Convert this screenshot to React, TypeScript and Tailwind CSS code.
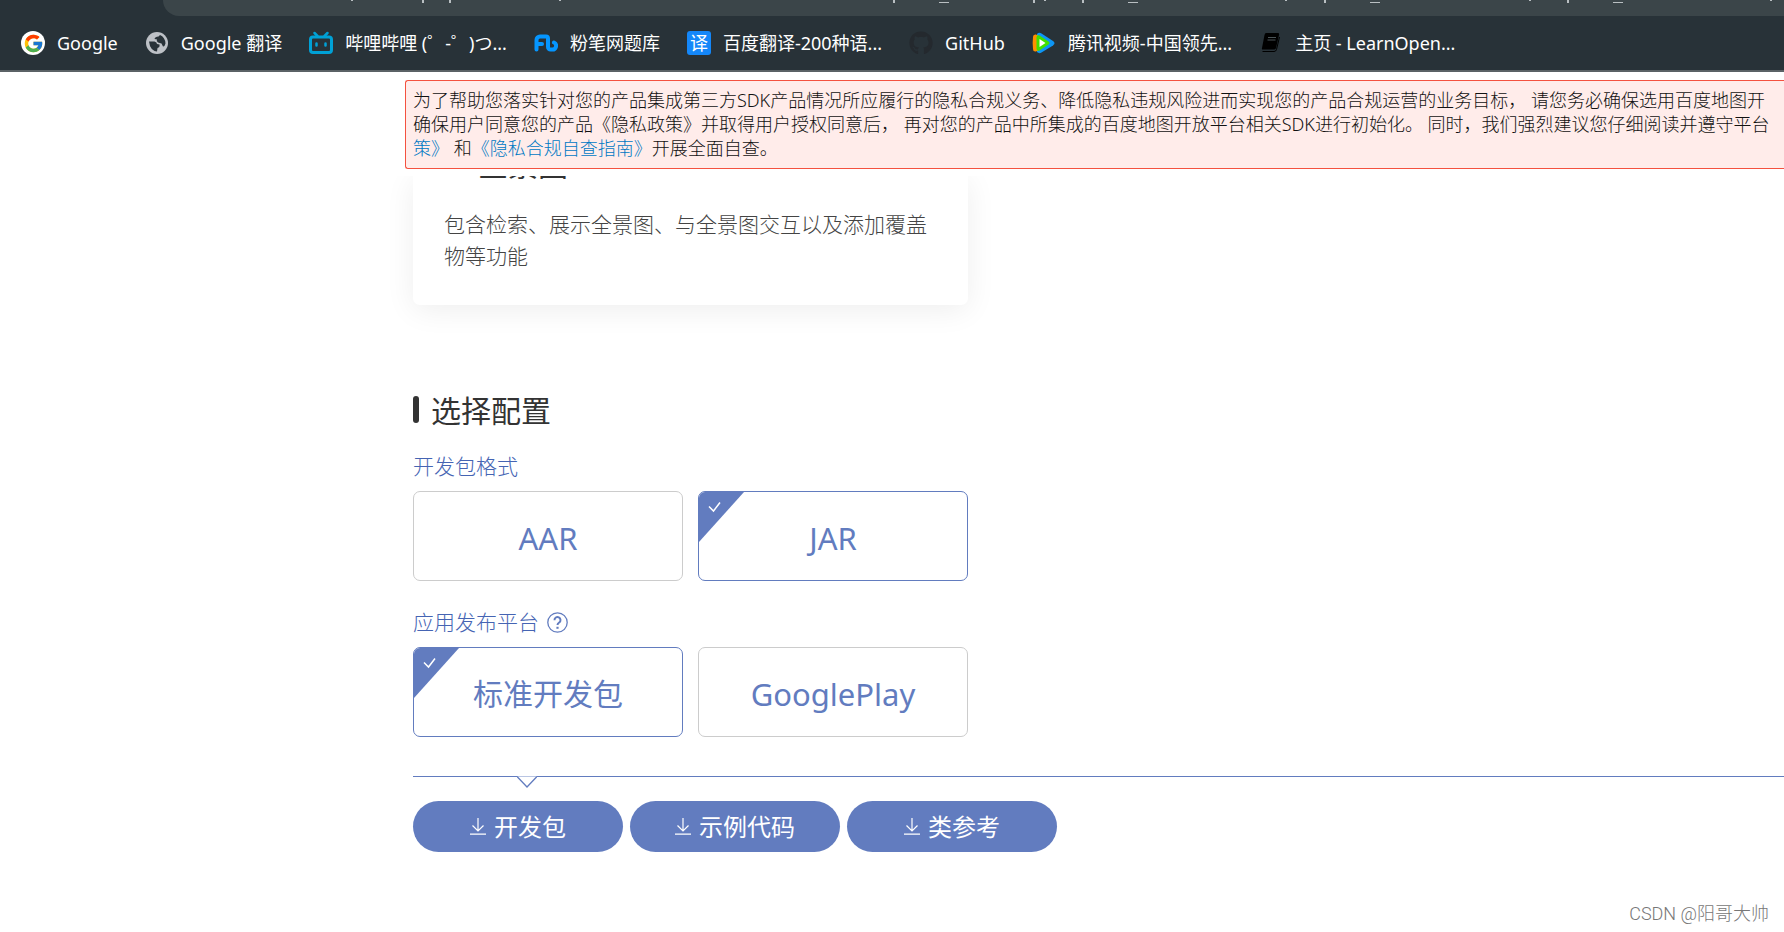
import React from "react";
import { FaGithub } from "react-icons/fa";
import { FcGoogle } from "react-icons/fc";

const bookmarks = [
  {
    label: "Google",
    icon: (
      <span className="w-6 h-6 rounded-full bg-white flex items-center justify-center">
        <FcGoogle className="text-[21px]" />
      </span>
    ),
  },
  {
    label: "Google 翻译",
    icon: (
      <svg width="22" height="22" viewBox="0 0 22 22">
        <circle cx="11" cy="11" r="11" fill="#bdc1c6" />
        <path
          d="M3 9.500L8.500 9.500Q11 10 11 12L13.500 12.500Q14 15.500 11.500 16L11 19.500Q4 18.500 3 9.500Z"
          fill="#283238"
        />
        <path
          d="M14 3Q19 5 19.500 11.500Q18.500 15 17 14.500L15.500 11.500L12 10.500Q10 9 11 7.500L8.500 7Q9 4.500 12.500 4.500Z"
          fill="#283238"
        />
      </svg>
    ),
  },
  {
    label: "哔哩哔哩 (゜-゜)つ...",
    icon: (
      <svg width="24" height="24" viewBox="0 0 24 24" fill="none" stroke="#00a1d6" strokeLinecap="round">
        <rect x="1.500" y="6" width="21" height="15.500" rx="2.500" strokeWidth="3" />
        <path d="M5.500 2l3 3M18.500 2l-3 3" strokeWidth="2.500" />
        <path d="M7.500 12.500v2M16.500 12.500v2" strokeWidth="2.500" />
      </svg>
    ),
  },
  {
    label: "粉笔网题库",
    icon: (
      <svg width="24" height="24" viewBox="0 0 24 24" fill="none" stroke="#0596ff" strokeWidth="4" strokeLinecap="round" strokeLinejoin="round">
        <path d="M2.500 18.500V9a3.500 3.500 0 0 1 3.500-3.500h6q2 0 2 2v8.500a2.500 2.500 0 0 0 2.500 2.500h1.500a3.700 3.700 0 0 0 2-7" />
        <path d="M3 13h5" />
      </svg>
    ),
  },
  {
    label: "百度翻译-200种语...",
    icon: (
      <span className="w-6 h-6 rounded-[3px] bg-[#1487f9] text-white text-[18px] leading-6 text-center">
        译
      </span>
    ),
  },
  { label: "GitHub", icon: <FaGithub className="text-[24px] text-[#24292e]" /> },
  {
    label: "腾讯视频-中国领先...",
    icon: (
      <svg width="24" height="24" viewBox="0 0 24 24">
        <path d="M5 3Q7 1 9.500 2.500L21 10Q24 12 21 14.500L9.500 21.500Q7 23 5 21Z" fill="#0e96f5" />
        <path d="M1 6Q1 3 4 3.500L9 6V18L4 20.500Q1 21 1 18Q.3 12 1 6Z" fill="#ff9000" />
        <path d="M4.500 6Q5 3.500 7.500 4.500L16.500 10.500Q18.500 12 16.500 13.500L7.500 19.500Q5 20.500 4.500 18Z" fill="#42e000" />
        <path d="M7.500 8L13.500 12L7.500 16Z" fill="#fff" />
      </svg>
    ),
  },
  {
    label: "主页 - LearnOpen...",
    icon: (
      <svg width="24" height="24" viewBox="0 0 24 24">
        <path d="M7 2h12q1.500 0 1 2l-3 13q-.4 1.500-2 1.500H4Q2.500 18.500 3 17L5.500 4Q6 2 7 2Z" fill="#000" />
        <path d="M3.500 20.500h11.500q2 0 2.500-2L20.500 6" fill="none" stroke="#000" />
        <path d="M9 6.500h8M8.500 9h8" stroke="#4a5356" />
      </svg>
    ),
  },
];

const formats = [
  { label: "AAR", checked: false, size: "text-[31px]" },
  { label: "JAR", checked: true, size: "text-[31px]" },
];

const platforms = [
  { label: "标准开发包", checked: true, size: "text-[30px]" },
  { label: "GooglePlay", checked: false, size: "text-[31px]" },
];

const downloads = ["开发包", "示例代码", "类参考"];

const BrowserBar = () => {
  return (
    <header className="bg-[#283238] border-b-2 border-[#5b6266]">
      <div className="h-4 ml-[163px] bg-[#3b4549] rounded-bl-3xl overflow-hidden">
        {/* tails of the address line that scrolls off the top */}
        <svg className="w-full" height="3" fill="none" stroke="#b9bfc2">
          <path
            strokeWidth="2"
            d="M189 0v1M260 0v3M287 0v3M397 0v1M731 0v3M871 0v3M882 0v1M920 0v3M1123 0v1M1162 0v3M1367 0v1M1405 0v3M1608 0v1"
          />
          <path d="M776 2.500h10M965 2.500h10M1207 2.500h10M1450 2.500h10" />
        </svg>
      </div>
      <nav className="flex items-center gap-[27px] h-[54px] px-[21px] overflow-hidden">
        {bookmarks.map((item) => (
          <a
            key={item.label}
            href="#"
            className="flex items-center gap-3 shrink-0 text-white text-[18px] leading-6 whitespace-nowrap"
          >
            <span className="flex items-center justify-center w-6 h-6">{item.icon}</span>
            {item.label}
          </a>
        ))}
      </nav>
    </header>
  );
};

const Notice = () => {
  return (
    <div className="ml-[405px] mt-2 mb-[7px] overflow-hidden">
      <p className="border border-r-0 border-[#f4513f] rounded-l-[3px] bg-[#ffecea] text-[#111] text-[18px] leading-6 font-light whitespace-nowrap pl-[7px] pt-[7px] pb-2">
        为了帮助您落实针对您的产品集成第三方SDK产品情况所应履行的隐私合规义务、降低隐私违规风险进而实现您的产品合规运营的业务目标， 请您务必确保选用百度地图开
        <br />
        确保用户同意您的产品《隐私政策》并取得用户授权同意后， 再对您的产品中所集成的百度地图开放平台相关SDK进行初始化。 同时，我们强烈建议您仔细阅读并遵守平台
        <br />
        <a href="#" className="text-[#0079c4]">策》</a> 和
        <a href="#" className="text-[#0079c4]">《隐私合规自查指南》</a>
        开展全面自查。
      </p>
    </div>
  );
};

const OptionGroup = ({
  name,
  options,
}: {
  name: string;
  options: { label: string; checked: boolean; size: string }[];
}) => {
  return (
    <div className="flex gap-[15px]">
      {options.map((option) => (
        <label
          key={option.label}
          className="relative flex items-center justify-center w-[270px] h-[90px] pt-[3px] border border-[#ccc] rounded-[7px] overflow-hidden cursor-pointer text-[#627cbf] has-checked:border-[#627cbf]"
        >
          <input
            type="radio"
            name={name}
            defaultChecked={option.checked}
            className="peer sr-only"
          />
          <svg
            className="absolute left-0 top-0 hidden peer-checked:block"
            width="45"
            height="50"
            viewBox="0 0 45 50"
          >
            <path d="M0 0H45L0 50Z" fill="#627cbf" />
            <path d="M10 14.500l4.500 4.500 6.500-8.500" fill="none" stroke="#fff" strokeWidth="1.500" />
          </svg>
          <span className={`${option.size} leading-10`}>{option.label}</span>
        </label>
      ))}
    </div>
  );
};

const App = () => {
  return (
    <div
      className="min-h-screen bg-white overflow-hidden font-['Noto_Sans','Noto_Sans_CJK_SC',sans-serif]"
      lang="zh-CN"
    >
      <BrowserBar />
      <Notice />
      <main className="pl-[413px] overflow-hidden">
        <section className="w-[555px] h-[129px] rounded-b-[7px] shadow-[0_5px_30px_rgba(0,0,0,0.07)] px-[31px]">
          <div className="h-[3px] flex items-end overflow-hidden">
            <h2 className="pl-[34px] text-[30px] leading-[29px] text-[#333]">全景图</h2>
          </div>
          <p className="pt-[29px] text-[21px] leading-8 font-light text-[#444]">
            包含检索、展示全景图、与全景图交互以及添加覆盖物等功能
          </p>
        </section>

        <h2 className="flex items-center gap-3 mt-[84px] text-[30px] leading-[44px] text-[#333]">
          <span className="w-[6px] h-[27px] mb-1 rounded-[3px] bg-[#333]" />
          选择配置
        </h2>

        <h3 className="mt-[17px] mb-[9px] text-[21px] leading-8 font-light text-[#4564b3]">
          开发包格式
        </h3>
        <OptionGroup name="format" options={formats} />

        <h3 className="flex items-center gap-2 mt-[25px] mb-[9px] text-[21px] leading-8 font-light text-[#4564b3]">
          应用发布平台
          <svg width="21" height="21" viewBox="0 0 21 21" fill="none" stroke="#627cbf">
            <circle cx="10.500" cy="10.500" r="9.700" strokeWidth="1.300" />
            <path d="M7.500 8.200a3 3 0 1 1 4.700 2.300c-1 .7-1.700 1.200-1.700 2.500" strokeWidth="2" />
            <path d="M10.500 14.800v2" strokeWidth="2.200" />
          </svg>
        </h3>
        <OptionGroup name="platform" options={platforms} />

        <div className="relative mt-[39px] border-t border-[#627cbf]">
          <svg className="absolute left-[104px] -top-px" width="20" height="12" viewBox="0 0 20 12">
            <path d="M0 0H20L10 11Z" fill="#fff" />
            <path d="M0 .5H20" stroke="#b9c5e3" />
            <path d="M0 .5L10 11L20 .5" fill="none" stroke="#627cbf" strokeWidth="1.300" />
          </svg>
        </div>

        <div className="flex gap-[7px] mt-6">
          {downloads.map((label) => (
            <button
              key={label}
              className="flex items-center justify-center gap-2 w-[210px] h-[51px] rounded-full bg-[#627cbf] text-white text-[24px] leading-8 cursor-pointer"
            >
              <svg width="16" height="17" viewBox="0 0 16 17" fill="none" stroke="#fff" strokeWidth="1.200">
                <path d="M8 0v13M2.500 7.500L8 13l5.500-5.500M0 16.200h16" />
              </svg>
              {label}
            </button>
          ))}
        </div>
      </main>

      <footer className="flex justify-end mt-12 pr-[15px] text-[18px] leading-7 font-light text-[#777] font-[Roboto,'Noto_Sans_CJK_SC',sans-serif]">
        CSDN @阳哥大帅
      </footer>
    </div>
  );
};

export default App;
